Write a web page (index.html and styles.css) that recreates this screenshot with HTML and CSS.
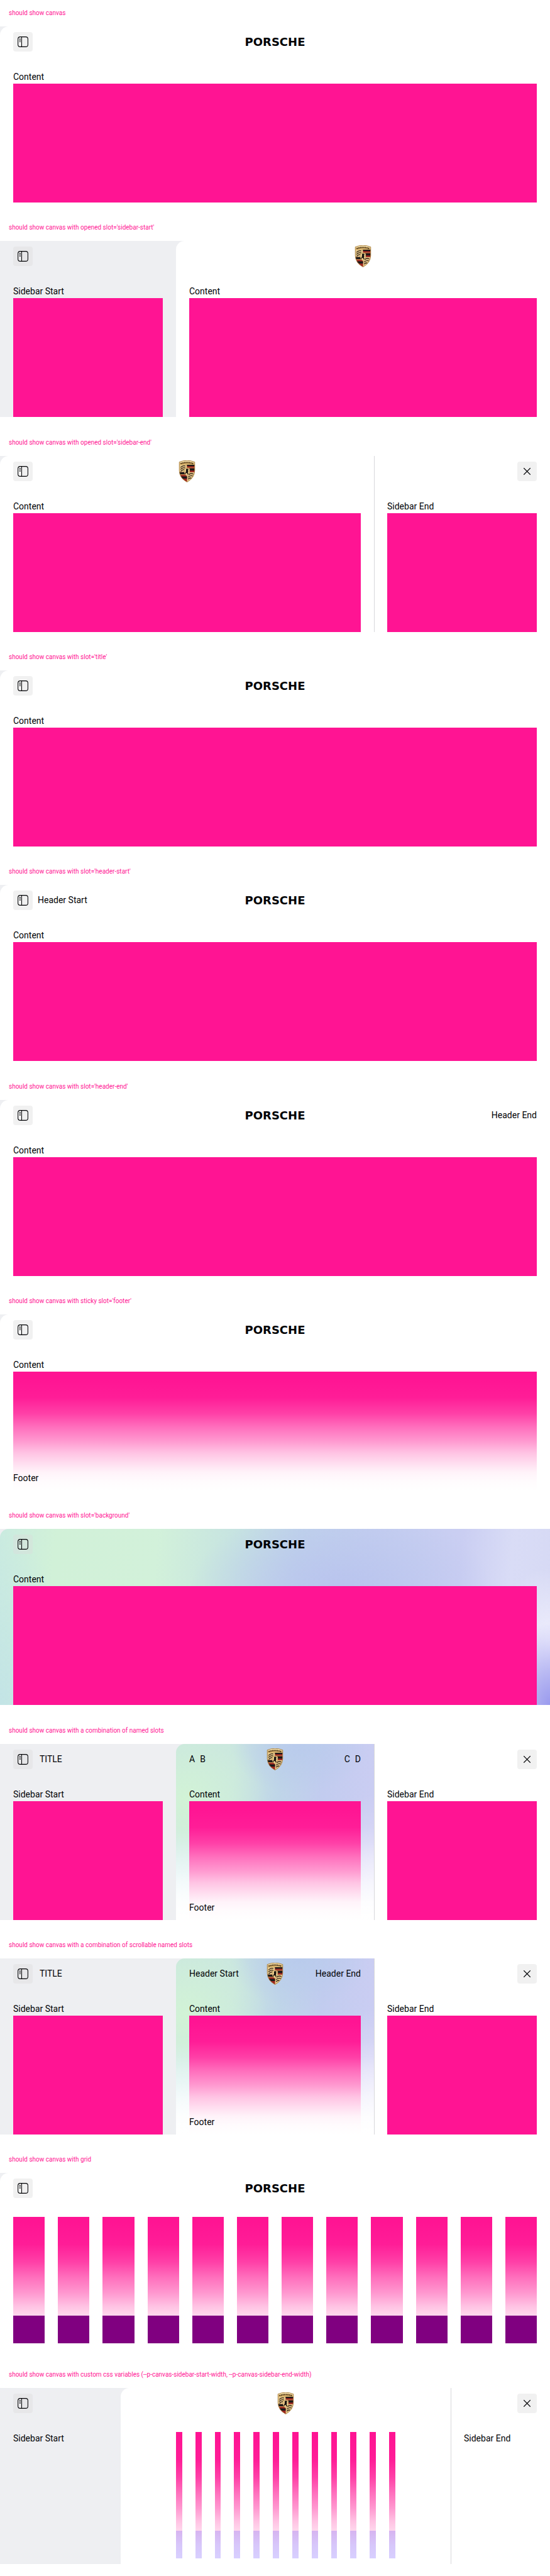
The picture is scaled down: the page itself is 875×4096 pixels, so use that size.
FILE: index.html
```html
<!DOCTYPE html>
<html lang="en">
<head>
<meta charset="utf-8">
<meta name="viewport" content="width=device-width, initial-scale=1">
<title>Canvas</title>
<link rel="stylesheet" href="styles.css">
</head>
<body>
<svg class="sprite" aria-hidden="true">
  <symbol id="sidebar" viewBox="0 0 24 24">
    <rect x="3" y="3" width="18" height="18" rx="4" fill="none" stroke="currentColor" stroke-width="1.2"/>
    <path d="M9.7 3v18M5.5 7h2.4M5.5 9.4h2.4M5.5 11.8h2.4" fill="none" stroke="currentColor" stroke-width="1.2"/>
  </symbol>
  <symbol id="close" viewBox="0 0 24 24">
    <path d="M6 6l12 12M18 6L6 18" fill="none" stroke="currentColor" stroke-width="1.3"/>
  </symbol>
  <symbol id="crest" viewBox="0 0 60 80">
    <clipPath id="shield"><path d="M2 6Q30-5 58 6V38Q57 64 30 79Q3 64 2 38Z"/></clipPath>
    <g clip-path="url(#shield)">
      <path fill="#d9b36c" d="M0 0h60v80H0z"/>
      <path fill="#f3dfae" d="M3 3Q30-6 57 3V9Q30 2 3 9Z"/>
      <path d="M7 12Q30 4 53 12" fill="none" stroke="#4a3418" stroke-width="5" stroke-dasharray="4 2"/>
      <path fill="#e8cb8d" d="M3 17h27v25H3zM30 43h27v36H30z"/>
      <path fill="#9c2420" d="M30 16h28v27H30zM2 43h28v36H2z"/>
      <path fill="#1c1a1a" d="M30 16h28v5H30zM30 29h28v8H30zM2 43h28v7H2zM2 58h28v8H2z"/>
      <path fill="#d0a45a" d="M30 26h28v2H30zM2 51h28v2H2z"/>
      <path d="M6 26q10-9 18-5M6 33q10-9 18-5M7 40q8-8 15-6M35 53q9-8 18-3M34 61q9-8 17-4M34 69q6-7 12-4" fill="none" stroke="#35261a" stroke-width="3"/>
      <path fill="#edcf8f" stroke="#8d6529" stroke-width="1" d="M20 30Q30 25 40 30V42Q39 51 30 57Q21 51 20 42Z"/>
      <path fill="#17120f" d="M27 31l6-1 3 4-3 2 2 4-2 3 2 6-3 3-2-7-4 2-1 4-2-2 2-6 2-4-1-3z"/>
    </g>
    <path d="M2 6Q30-5 58 6V38Q57 64 30 79Q3 64 2 38Z" fill="none" stroke="#a67c39" stroke-width="2"/>
  </symbol>
</svg>

<section class="story">
  <h2 class="label">should show canvas</h2>
  <div class="canvas">
    <main class="main">
      <header class="bar"><div class="start"><button class="btn" aria-label="Open sidebar"><svg><use href="#sidebar"/></svg></button></div><a class="wordmark" href="#">PORSCHE</a><div class="end"></div></header>
      <div class="content"><p>Content</p><div class="block"></div></div>
    </main>
  </div>
</section>

<section class="story">
  <h2 class="label">should show canvas with opened slot='sidebar-start'</h2>
  <div class="canvas">
    <aside class="side-start">
      <header class="bar"><div class="start"><button class="btn" aria-label="Close sidebar"><svg><use href="#sidebar"/></svg></button></div></header>
      <div class="content"><p>Sidebar Start</p><div class="block"></div></div>
    </aside>
    <main class="main">
      <header class="bar"><div class="start"></div><a class="crest" href="#" aria-label="Home"><svg><use href="#crest"/></svg></a><div class="end"></div></header>
      <div class="content"><p>Content</p><div class="block"></div></div>
    </main>
  </div>
</section>

<section class="story">
  <h2 class="label">should show canvas with opened slot='sidebar-end'</h2>
  <div class="canvas">
    <main class="main">
      <header class="bar"><div class="start"><button class="btn" aria-label="Open sidebar"><svg><use href="#sidebar"/></svg></button></div><a class="crest" href="#" aria-label="Home"><svg><use href="#crest"/></svg></a><div class="end"></div></header>
      <div class="content"><p>Content</p><div class="block"></div></div>
    </main>
    <aside class="side-end">
      <header class="bar"><div class="end"><button class="btn" aria-label="Close"><svg><use href="#close"/></svg></button></div></header>
      <div class="content"><p>Sidebar End</p><div class="block"></div></div>
    </aside>
  </div>
</section>

<section class="story">
  <h2 class="label">should show canvas with slot='title'</h2>
  <div class="canvas">
    <main class="main">
      <header class="bar"><div class="start"><button class="btn" aria-label="Open sidebar"><svg><use href="#sidebar"/></svg></button></div><a class="wordmark" href="#">PORSCHE</a><div class="end"></div></header>
      <div class="content"><p>Content</p><div class="block"></div></div>
    </main>
  </div>
</section>

<section class="story">
  <h2 class="label">should show canvas with slot='header-start'</h2>
  <div class="canvas">
    <main class="main">
      <header class="bar"><div class="start"><button class="btn" aria-label="Open sidebar"><svg><use href="#sidebar"/></svg></button><span>Header Start</span></div><a class="wordmark" href="#">PORSCHE</a><div class="end"></div></header>
      <div class="content"><p>Content</p><div class="block"></div></div>
    </main>
  </div>
</section>

<section class="story">
  <h2 class="label">should show canvas with slot='header-end'</h2>
  <div class="canvas">
    <main class="main">
      <header class="bar"><div class="start"><button class="btn" aria-label="Open sidebar"><svg><use href="#sidebar"/></svg></button></div><a class="wordmark" href="#">PORSCHE</a><div class="end"><span>Header End</span></div></header>
      <div class="content"><p>Content</p><div class="block"></div></div>
    </main>
  </div>
</section>

<section class="story">
  <h2 class="label">should show canvas with sticky slot='footer'</h2>
  <div class="canvas">
    <main class="main">
      <header class="bar"><div class="start"><button class="btn" aria-label="Open sidebar"><svg><use href="#sidebar"/></svg></button></div><a class="wordmark" href="#">PORSCHE</a><div class="end"></div></header>
      <div class="content"><p>Content</p><div class="block"></div></div>
      <footer class="footer">Footer</footer>
    </main>
  </div>
</section>

<section class="story">
  <h2 class="label">should show canvas with slot='background'</h2>
  <div class="canvas">
    <main class="main mesh-wide">
      <header class="bar"><div class="start"><button class="btn" aria-label="Open sidebar"><svg><use href="#sidebar"/></svg></button></div><a class="wordmark" href="#">PORSCHE</a><div class="end"></div></header>
      <div class="content"><p>Content</p><div class="block"></div></div>
    </main>
  </div>
</section>

<section class="story">
  <h2 class="label">should show canvas with a combination of named slots</h2>
  <div class="canvas">
    <aside class="side-start">
      <header class="bar"><div class="start title"><button class="btn" aria-label="Close sidebar"><svg><use href="#sidebar"/></svg></button><span>TITLE</span></div></header>
      <div class="content"><p>Sidebar Start</p><div class="block"></div></div>
    </aside>
    <main class="main mesh-narrow">
      <header class="bar"><div class="start"><span>A</span><span>B</span></div><a class="crest" href="#" aria-label="Home"><svg><use href="#crest"/></svg></a><div class="end"><span>C</span><span>D</span></div></header>
      <div class="content"><p>Content</p><div class="block"></div></div>
      <footer class="footer">Footer</footer>
    </main>
    <aside class="side-end">
      <header class="bar"><div class="end"><button class="btn" aria-label="Close"><svg><use href="#close"/></svg></button></div></header>
      <div class="content"><p>Sidebar End</p><div class="block"></div></div>
    </aside>
  </div>
</section>

<section class="story">
  <h2 class="label">should show canvas with a combination of scrollable named slots</h2>
  <div class="canvas">
    <aside class="side-start">
      <header class="bar"><div class="start title"><button class="btn" aria-label="Close sidebar"><svg><use href="#sidebar"/></svg></button><span>TITLE</span></div></header>
      <div class="content"><p>Sidebar Start</p><div class="block"></div></div>
    </aside>
    <main class="main mesh-narrow">
      <header class="bar"><div class="start"><span>Header Start</span></div><a class="crest" href="#" aria-label="Home"><svg><use href="#crest"/></svg></a><div class="end"><span>Header End</span></div></header>
      <div class="content"><p>Content</p><div class="block"></div></div>
      <footer class="footer">Footer</footer>
    </main>
    <aside class="side-end">
      <header class="bar"><div class="end"><button class="btn" aria-label="Close"><svg><use href="#close"/></svg></button></div></header>
      <div class="content"><p>Sidebar End</p><div class="block"></div></div>
    </aside>
  </div>
</section>

<section class="story">
  <h2 class="label">should show canvas with grid</h2>
  <div class="canvas">
    <main class="main">
      <header class="bar"><div class="start"><button class="btn" aria-label="Open sidebar"><svg><use href="#sidebar"/></svg></button></div><a class="wordmark" href="#">PORSCHE</a><div class="end"></div></header>
      <div class="content cols"><i></i><i></i><i></i><i></i><i></i><i></i><i></i><i></i><i></i><i></i><i></i><i></i></div>
      <footer class="footer cols purple"><i></i><i></i><i></i><i></i><i></i><i></i><i></i><i></i><i></i><i></i><i></i><i></i></footer>
    </main>
  </div>
</section>

<section class="story">
  <h2 class="label">should show canvas with custom css variables (--p-canvas-sidebar-start-width, --p-canvas-sidebar-end-width)</h2>
  <div class="canvas custom">
    <aside class="side-start">
      <header class="bar"><div class="start"><button class="btn" aria-label="Close sidebar"><svg><use href="#sidebar"/></svg></button></div></header>
      <div class="content"><p>Sidebar Start</p></div>
    </aside>
    <main class="main">
      <header class="bar"><div class="start"></div><a class="crest" href="#" aria-label="Home"><svg><use href="#crest"/></svg></a><div class="end"></div></header>
      <div class="content cols inset"><i></i><i></i><i></i><i></i><i></i><i></i><i></i><i></i><i></i><i></i><i></i><i></i></div>
      <footer class="footer cols inset lavender"><i></i><i></i><i></i><i></i><i></i><i></i><i></i><i></i><i></i><i></i><i></i><i></i></footer>
    </main>
    <aside class="side-end">
      <header class="bar"><div class="end"><button class="btn" aria-label="Close"><svg><use href="#close"/></svg></button></div></header>
      <div class="content"><p>Sidebar End</p></div>
    </aside>
  </div>
</section>
</body>
</html>
```
FILE: styles.css
```css
* { box-sizing: border-box; }

body {
  margin: 0;
  min-height: 100vh;
  display: grid;
  grid-auto-rows: 1fr;
  background: #fff;
  color: #010205;
  font: 14px/21px Roboto, "Liberation Sans", sans-serif;
}

p { margin: 0; }

.sprite { position: absolute; width: 0; height: 0; }

.label {
  margin: 0;
  padding: 0 14px;
  color: #ff1493;
  font-size: 10px;
  font-weight: 400;
  line-height: 42px;
}

.canvas {
  --start: 280px;
  --end: 280px;
  display: flex;
  height: 280px;
  overflow: hidden;
  background: #eeeff2;
}

.custom { --start: 192px; --end: 158px; }

.main {
  position: relative;
  flex: 1;
  min-width: 0;
  background: #fff;
  border-top-left-radius: 14px;
}

.side-start { width: var(--start); }

.side-end {
  width: var(--end);
  background: #fff;
  box-shadow: inset 1px 0 #d8d8db;
}

.bar {
  display: grid;
  grid-template-columns: 1fr auto 1fr;
  align-items: center;
  height: 49px;
  padding: 0 21px;
}

.side-start .bar,
.side-end .bar { grid-template-columns: 1fr; }

.start, .end { display: flex; align-items: center; gap: 8px; }
.end { justify-content: flex-end; }
.title { gap: 11px; }

.btn {
  display: grid;
  place-items: center;
  width: 31px;
  height: 31px;
  padding: 0;
  border: 0;
  border-radius: 4px;
  background: #dcdcdc66;
  color: #010205;
}

.btn svg { width: 21px; height: 21px; }

.wordmark {
  color: #010205;
  font: 700 18px/21px "DejaVu Sans", sans-serif;
  text-decoration: none;
}

.crest svg { display: block; width: 27px; height: 35px; }

.content { padding: 21px 21px 0; }

.block { height: 189px; background: #ff1493; }

.cols {
  display: grid;
  grid-template-columns: repeat(12, 1fr);
  gap: 21px;
}

.cols i { height: 157px; background: #ff1493; }

.footer {
  position: absolute;
  inset: auto 0 0;
  padding: 150px 21px 9px;
  background: linear-gradient(#fff0, #ffffff0a 18%, #ffffff30 32%, #ffffff63 44%, #ffffff8f 56%, #ffffffbf 67%, #ffffffde 77%, #fffffff2 84%, #fffffffb 92%, #fff);
}

.footer.cols i { height: 44px; }
.purple i { background: purple; }
.lavender i { background: linear-gradient(#d6b4f0, #d7c6fa 50%, #d8d0ff); }

.content.inset, .footer.inset { padding-left: 88px; padding-right: 88px; }

.mesh-wide {
  background:
    radial-gradient(80px 130px at 100% 100%, #9a9aee, #a5a5f000),
    radial-gradient(90px 120px at 100% 65%, #f0effd, #f0effd00),
    radial-gradient(240px 130px at 62% 34%, #b9c4ee, #b9c4ee00),
    radial-gradient(120px 280px at 0 100%, #c3e4e6, #c3e4e600),
    linear-gradient(95deg, #caebe0, #d1f1d8 10%, #d2f1da 28%, #c6e3e1 42%, #bfd3ea 53%, #c3ceef 65%, #cacef2 82%, #d9dcf6 91%, #d6d9f4);
}

.mesh-narrow {
  background:
    radial-gradient(90px 120px at 100% 72%, #dedbf8, #dedbf800),
    radial-gradient(110px 110px at 0 88%, #d5eef4, #d5eef400),
    radial-gradient(130px 130px at 5% 32%, #d2f3d6, #d2f3d600),
    radial-gradient(110px 80px at 62% 0, #b9cbec, #b9cbec00),
    linear-gradient(95deg, #cae6e0, #cae6e0 28%, #bfd5e8 50%, #c2ccef 70%, #cccdf3);
}
```
